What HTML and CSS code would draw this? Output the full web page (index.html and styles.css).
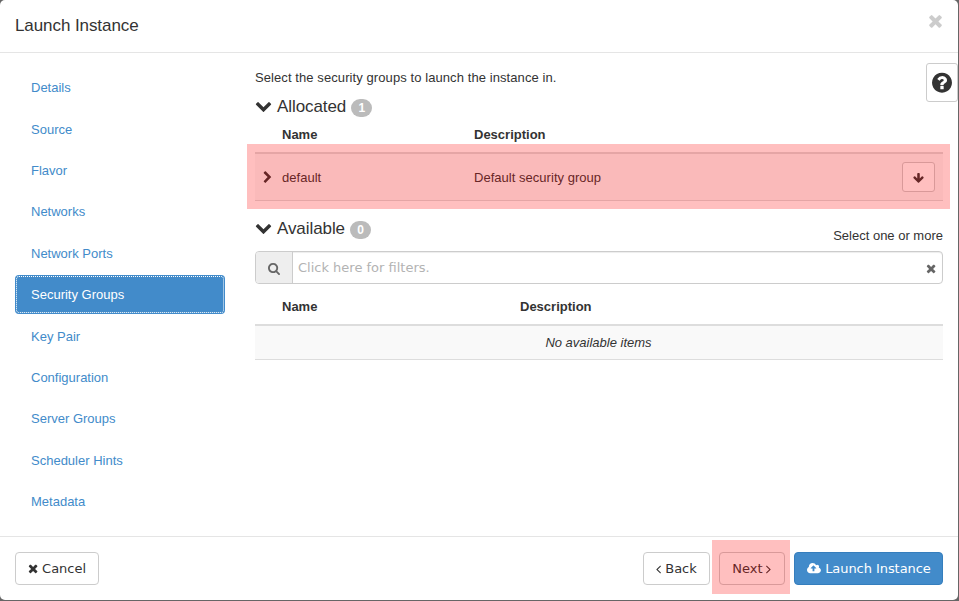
FILE: index.html
```html
<!DOCTYPE html>
<html lang="en">
<head>
<meta charset="utf-8">
<title>Launch Instance</title>
<link rel="stylesheet" href="styles.css">
</head>
<body>
<svg class="defs" aria-hidden="true">
  <symbol id="times" viewBox="192 0 1408 1792"><path d="M1490 1322q0 40-28 68l-136 136q-28 28-68 28t-68-28l-294-294-294 294q-28 28-68 28t-68-28l-136-136q-28-28-28-68t28-68l294-294-294-294q-28-28-28-68t28-68l136-136q28-28 68-28t68 28l294 294 294-294q28-28 68-28t68 28l136 136q28 28 28 68t-28 68l-294 294 294 294q28 28 28 68z"/></symbol>
  <symbol id="chevron-down" viewBox="0 0 1792 1792"><path d="M1683 808l-742 741q-19 19-45 19t-45-19l-742-741q-19-19-19-45.500t19-45.500l166-165q19-19 45-19t45 19l531 531 531-531q19-19 45-19t45 19l166 165q19 19 19 45.500t-19 45.500z"/></symbol>
  <symbol id="chevron-right" viewBox="256 0 1280 1792"><path d="M1363 877l-742 742q-19 19-45 19t-45-19l-166-166q-19-19-19-45t19-45l531-531-531-531q-19-19-19-45t19-45l166-166q19-19 45-19t45 19l742 742q19 19 19 45t-19 45z"/></symbol>
  <symbol id="search" viewBox="64 0 1664 1792"><path d="M1216 832q0-185-131.500-316.500t-316.500-131.500-316.500 131.500-131.500 316.500 131.500 316.500 316.500 131.500 316.500-131.500 131.500-316.500zm512 832q0 52-38 90t-90 38q-54 0-90-38l-343-342q-179 124-399 124-143 0-273.500-55.500t-225-150-150-225-55.500-273.500 55.500-273.500 150-225 225-150 273.500-55.500 273.500 55.500 225 150 150 225 55.500 273.500q0 220-124 399l343 343q37 37 37 90z"/></symbol>
  <symbol id="question" viewBox="128 0 1536 1792"><path d="M1024 1376v-192q0-14-9-23t-23-9h-192q-14 0-23 9t-9 23v192q0 14 9 23t23 9h192q14 0 23-9t9-23zm256-672q0-88-55.500-163t-138.500-116-170-41q-243 0-371 213-15 24 8 42l132 100q7 6 19 6 16 0 25-12 53-68 86-92 34-24 86-24 48 0 85.500 26t37.500 59q0 38-20 61t-68 45q-63 28-115.500 86.500t-52.500 125.500v36q0 14 9 23t23 9h192q14 0 23-9t9-23q0-19 21.500-49.500t54.500-49.500q32-18 49-28.500t46-35 44.500-48 28-60.500 12.500-81zm384 192q0 209-103 385.500t-279.500 279.500-385.500 103-385.500-103-279.500-279.500-103-385.500 103-385.500 279.500-279.500 385.500-103 385.500 103 279.500 279.500 103 385.500z"/></symbol>
  <symbol id="arrow-down" viewBox="64 0 1664 1792"><path d="M1675 832q0 53-37 90l-651 652q-39 37-91 37-53 0-90-37l-651-652q-38-36-38-90 0-53 38-91l74-75q39-37 91-37 53 0 90 37l294 294v-704q0-52 38-90t90-38h128q52 0 90 38t38 90v704l294-294q37-37 90-37 52 0 91 37l75 75q37 39 37 91z"/></symbol>
  <symbol id="angle-right" viewBox="576 0 640 1792"><path d="M1171 960q0 13-10 23l-466 466q-10 10-23 10t-23-10l-50-50q-10-10-10-23t10-23l393-393-393-393q-10-10-10-23t10-23l50-50q10-10 23-10t23 10l466 466q10 10 10 23z"/></symbol>
  <symbol id="angle-left" viewBox="576 0 640 1792"><path d="M1203 544q0 13-10 23l-393 393 393 393q10 10 10 23t-10 23l-50 50q-10 10-23 10t-23-10l-466-466q-10-10-10-23t10-23l466-466q10-10 23-10t23 10l50 50q10 10 10 23z"/></symbol>
  <symbol id="cloud-upload" viewBox="-64 0 1920 1792"><path d="M1216 864q0-14-9-23l-352-352q-9-9-23-9t-23 9l-351 351q-10 12-10 24 0 14 9 23t23 9h224v352q0 13 9.500 22.500t22.500 9.500h192q13 0 22.500-9.500t9.500-22.500v-352h224q13 0 22.500-9.500t9.500-22.500zm640 288q0 159-112.500 271.500t-271.500 112.500h-1088q-185 0-316.500-131.500t-131.500-316.500q0-130 70-240t188-165q-2-30-2-43 0-212 150-362t362-150q156 0 285.500 87t188.500 231q71-62 166-62 106 0 181 75t75 181q0 76-41 138 130 31 213.500 135.500t83.500 238.500z"/></symbol>
</svg>
<div class="modal">
  <header class="modal-header">
    <h1 class="title">Launch Instance</h1>
    <svg class="close"><use href="#times"/></svg>
  </header>
  <div class="modal-body">
    <nav class="steps">
      <a class="step">Details</a>
      <a class="step">Source</a>
      <a class="step">Flavor</a>
      <a class="step">Networks</a>
      <a class="step">Network Ports</a>
      <a class="step active">Security Groups</a>
      <a class="step">Key Pair</a>
      <a class="step">Configuration</a>
      <a class="step">Server Groups</a>
      <a class="step">Scheduler Hints</a>
      <a class="step">Metadata</a>
    </nav>
    <main class="content">
      <p class="intro">Select the security groups to launch the instance in.</p>
      <section class="allocated">
        <h2 class="section-title"><svg class="toggle"><use href="#chevron-down"/></svg><span>Allocated</span><span class="badge">1</span></h2>
        <div class="row head"><span>Name</span><span>Description</span></div>
        <div class="row item">
          <svg class="expand"><use href="#chevron-right"/></svg>
          <span class="cell">default</span><span class="cell">Default security group</span>
          <button class="move"><svg class="icon-arrow"><use href="#arrow-down"/></svg></button>
          <div class="highlight row-highlight"></div>
        </div>
      </section>
      <section class="available">
        <div class="available-top">
          <h2 class="section-title"><svg class="toggle"><use href="#chevron-down"/></svg><span>Available</span><span class="badge">0</span></h2>
          <span class="hint">Select one or more</span>
        </div>
        <div class="filter">
          <span class="addon"><svg class="icon-search"><use href="#search"/></svg></span>
          <span class="placeholder">Click here for filters.</span>
          <svg class="clear"><use href="#times"/></svg>
        </div>
        <div class="row head head-available"><span>Name</span><span>Description</span></div>
        <div class="empty">No available items</div>
      </section>
    </main>
    <button class="help"><svg class="icon-help"><use href="#question"/></svg></button>
  </div>
  <footer class="modal-footer">
    <button class="btn cancel"><svg class="icon-times"><use href="#times"/></svg>Cancel</button>
    <button class="btn back"><svg class="icon-angle"><use href="#angle-left"/></svg>Back</button>
    <div class="next-wrap"><button class="btn next">Next<svg class="icon-angle"><use href="#angle-right"/></svg></button><div class="highlight next-highlight"></div></div>
    <button class="btn primary"><svg class="icon-cloud"><use href="#cloud-upload"/></svg>Launch Instance</button>
  </footer>
</div>
</body>
</html>
```
FILE: styles.css
```css
* { box-sizing: border-box; }
body {
  margin: 0;
  width: 959px;
  height: 601px;
  overflow: hidden;
  background: #666;
  color: #333;
  font: 13px/18px "Liberation Sans", Arial, sans-serif;
}
svg { fill: currentColor; flex: none; display: block; }
.defs { display: none; }
button { font: inherit; color: inherit; padding: 0; }
.modal {
  width: 958px;
  height: 600px;
  background: #fff;
  border-radius: 5px;
  display: flex;
  flex-direction: column;
}
.modal-header {
  height: 53px;
  padding: 0 15px;
  border-bottom: 1px solid #e5e5e5;
  display: flex;
  justify-content: space-between;
}
.title { margin: 15px 0 0; font-size: 17px; line-height: 22px; font-weight: 400; letter-spacing: -.080px; }
.close { width: 15px; height: 19.500px; margin-top: 11px; color: #ccc; }
.modal-body { height: 483px; display: flex; position: relative; }
.steps {
  width: 225px;
  padding: 15.500px 0 0 15px;
  display: flex;
  flex-direction: column;
  gap: 2.790px;
}
.step {
  height: 38.570px;
  padding: 10.950px 16px 0;
  line-height: 18.570px;
  color: #428bca;
  border-radius: 4px;
}
.step.active { background: #428bca; color: #fff; outline: 1px dotted #fff; outline-offset: -2px; }
.content { width: 718px; padding: 16px 0 0 30px; }
.intro { margin: 0; height: 26px; letter-spacing: .085px; }
.section-title {
  margin: 0;
  height: 24px;
  display: flex;
  align-items: center;
  font-size: 17px;
  font-weight: 400;
  letter-spacing: -.080px;
}
.toggle { width: 17px; height: 17px; margin: -3px 5px 0 0; }
.badge {
  width: 21px;
  height: 18px;
  margin: 2px 0 0 5px;
  border-radius: 9px;
  background: #bbb;
  color: #fff;
  font-size: 12px;
  line-height: 18px;
  font-weight: 700;
  text-align: center;
}
.row {
  display: grid;
  grid-template-columns: 192px 1fr auto;
  align-items: center;
  padding-left: 27px;
}
.head { height: 35px; padding-bottom: 1px; border-bottom: 2px solid #ddd; font-weight: 700; }
.item {
  position: relative;
  height: 47px;
  background: #f9f9f9;
  border-bottom: 1px solid #ddd;
  grid-template-columns: 19px 192px 1fr auto;
  padding: 0 8px;
}
.cell { padding-top: 2px; letter-spacing: .030px; }
.expand { width: 9.300px; height: 13px; }
.move {
  width: 33px;
  height: 30px;
  margin-bottom: 1px;
  border: 1px solid #ccc;
  border-radius: 3px;
  background: #fff;
  display: grid;
  place-items: center;
}
.icon-arrow { width: 11px; height: 12px; margin-top: 2px; }
.highlight { position: absolute; background: rgba(255, 0, 0, .25); }
.row-highlight { left: -7.700px; right: -6.800px; top: -10px; bottom: -9px; }
.available { margin-top: 16px; }
.available-top { height: 34px; display: flex; justify-content: space-between; }
.hint { margin-top: 10px; }
.filter {
  height: 33px;
  border: 1px solid #ccc;
  border-radius: 4px;
  display: flex;
  align-items: center;
  font-family: "DejaVu Sans", sans-serif;
  box-shadow: inset 0 1px 1px rgba(0, 0, 0, .075);
}
.addon {
  width: 37px;
  height: 31px;
  background: #eee;
  border-right: 1px solid #ccc;
  border-radius: 3px 0 0 3px;
  display: grid;
  place-items: center;
  color: #666;
}
.icon-search { width: 12px; height: 13px; margin-top: 2px; }
.placeholder { flex: 1; margin-left: 5px; color: #b3b3b3; }
.clear { width: 10.200px; height: 13px; margin: 1px 6px 0 0; color: #666; }
.head-available { height: 42px; padding-bottom: 0; padding-top: 5px; grid-template-columns: 238px 1fr; }
.empty {
  height: 34px;
  padding-right: 1px;
  line-height: 33px;
  background: #f9f9f9;
  border-bottom: 1px solid #ddd;
  text-align: center;
  font-style: italic;
}
.help {
  position: absolute;
  right: 0;
  top: 10px;
  width: 32px;
  height: 39px;
  border: 1px solid #ccc;
  border-radius: 3px;
  background: #fff;
  display: grid;
  place-items: center;
}
.icon-help { width: 20px; height: 23.300px; }
.modal-footer {
  height: 64px;
  padding: 15px 15px 0;
  border-top: 1px solid #e5e5e5;
  display: flex;
  align-items: flex-start;
  font-family: "DejaVu Sans", sans-serif;
}
.btn {
  height: 33px;
  border: 1px solid #ccc;
  border-radius: 4px;
  background: #fff;
  display: flex;
  align-items: center;
  justify-content: center;
  gap: 4px;
}
.cancel { width: 84px; margin-right: auto; }
.back { width: 67px; }
.next-wrap { position: relative; margin: 0 9px; }
.next { width: 66px; gap: 3px; padding-right: 1px; }
.next-highlight { left: -7px; right: -5px; top: -12px; bottom: -9px; }
.primary { width: 149px; padding-left: 1px; background: #428bca; border-color: #357ebd; color: #fff; letter-spacing: -.060px; }
.icon-times { width: 10.200px; height: 13px; }
.icon-angle { width: 5px; height: 14px; }
.icon-cloud { width: 13.900px; height: 13px; }
```
